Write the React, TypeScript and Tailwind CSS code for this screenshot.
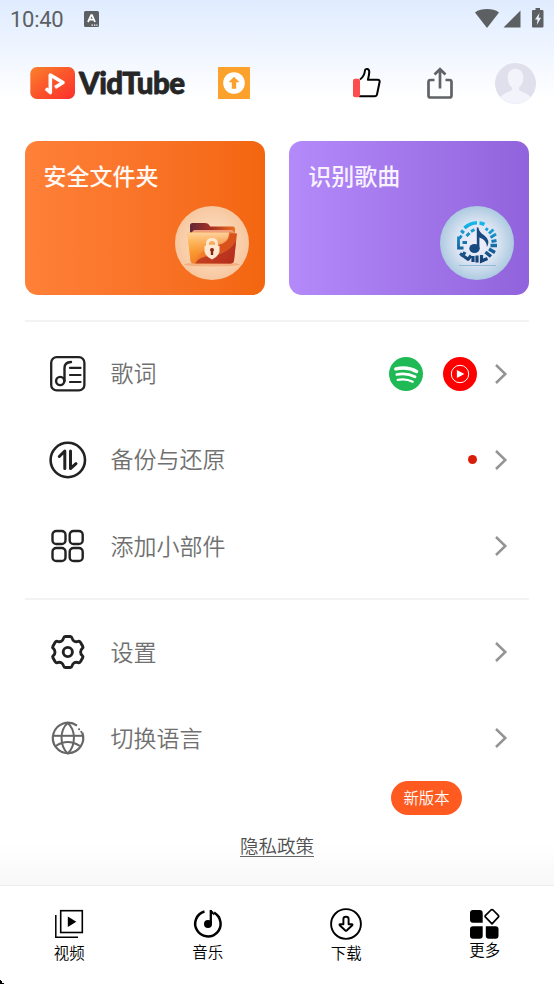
import React from 'react';

type IconProps = { className?: string };

const FONT = "font-['Roboto','Noto_Sans_CJK_SC',sans-serif]";

function StatusBar() {
  return (
    <div className="flex h-[38px] items-center justify-between pl-[10px] pr-[10px] text-[#5c6063]">
      <div className="flex items-center gap-[20px]">
        <span className="w-[54px] whitespace-nowrap pt-[1px] text-[22px] leading-[38px] tracking-[-0.3px]">10:40</span>
        <svg width="15" height="16" viewBox="0 0 15 16">
          <rect width="15" height="16" rx="1.5" fill="#5c6063" />
          <path d="M4 11 7.2 4.2h.8L11 11M5.5 8.7h4" fill="none" stroke="#fff" strokeWidth="1.8" />
          <path d="M7.5 14.2h1.4M10 14.2h1.4M12.3 14.2h1.2" stroke="#fff" strokeWidth="1.2" />
        </svg>
      </div>
      <div className="flex items-center">
        <svg width="24" height="20" viewBox="0 0 24 20" fill="#5c6063">
          <path d="M0 3.500C3.400.9 7.400 0 12 0s8.600.9 12 3.500L12 19z" />
        </svg>
        <svg className="ml-[4px] mt-[-1px]" width="18" height="18" viewBox="0 0 18 18" fill="#5c6063">
          <path d="M17.500.5v17H.5z" />
        </svg>
        <svg className="ml-[11px] mt-[-2px]" width="12" height="20" viewBox="0 0 12 20">
          <path d="M3.500 0h4.500v2H10.500a1 1 0 0 1 1 1v15.500a1 1 0 0 1-1 1H1a1 1 0 0 1-1-1V3a1 1 0 0 1 1-1h2.500z" fill="#5c6063" />
          <path d="M7.500 5 3 11.500h2.500L4.800 17 9 9.800H6.600z" fill="#eef4fd" />
        </svg>
      </div>
    </div>
  );
}

function Logo() {
  return (
    <svg width="157" height="44" viewBox="0 -5 157 44">
      <defs>
        <linearGradient id="logo" x1="0" y1="0" x2="1" y2="1">
          <stop offset="0" stopColor="#fb812c" />
          <stop offset=".5" stopColor="#fb552b" />
          <stop offset="1" stopColor="#fc2f2c" />
        </linearGradient>
      </defs>
      <rect x=".3" y="1" width="44.700" height="32" rx="6.500" fill="url(#logo)" />
      <path d="M15.800 22.500 20.300 26.500V9L33 16.500 25 21.500" fill="none" stroke="#fff" strokeWidth="3.600" strokeLinejoin="round" />
      <text
        x="49"
        y="28"
        textLength="105.500"
        lengthAdjust="spacingAndGlyphs"
        fill="#262626"
        stroke="#262626"
        strokeWidth=".8"
        strokeLinejoin="round"
        className="font-['Lato',sans-serif] text-[30px] font-black tracking-[-0.6px]"
      >
        VidTube
      </text>
    </svg>
  );
}

function Header() {
  return (
    <header className="flex h-[90px] items-center pl-[30px] pr-[18px]">
      <Logo />
      <div className="ml-[31px] flex h-8 w-8 items-center justify-center bg-[#fca12b]">
        <svg width="22" height="22" viewBox="0 0 22 22">
          <circle cx="11" cy="11" r="10.800" fill="#fff" />
          <path d="M11 4.700 5.500 10.200h3.300v6.500h4.400v-6.500h3.300z" fill="#fca12b" />
        </svg>
      </div>
      <svg className="ml-[103px]" width="30" height="32" viewBox="0 0 30 32">
        <path
          d="M7 12.500c3-2 4.500-5 5-9 .2-2.200 4-2.200 4.200.8.200 2.600-.4 5-1.300 8.400h9.800c1.500 0 2.200 1 1.900 2.300L24 27.500c-.3 1.300-1 1.700-2 1.700H6"
          fill="#fff"
          stroke="#000"
          strokeWidth="2"
          strokeLinejoin="round"
        />
        <rect x="0" y="11.800" width="7" height="18.500" rx="2" fill="#fe4b4e" />
      </svg>
      <svg className="ml-[43px]" width="28" height="32" viewBox="0 0 28 32" fill="none" stroke="#5f6267" strokeWidth="2.700">
        <path d="M8.500 13H4.500a2 2 0 0 0-2 2v13.500a2 2 0 0 0 2 2h19a2 2 0 0 0 2-2V15a2 2 0 0 0-2-2h-4" />
        <path d="M14 21.500V3M8.500 7.500 14 2.200l5.500 5.300" />
      </svg>
      <svg className="ml-auto" width="41" height="41" viewBox="0 0 40 40">
        <clipPath id="avatar">
          <circle cx="20" cy="20" r="20" />
        </clipPath>
        <g clipPath="url(#avatar)">
          <rect width="40" height="40" fill="#dfe0eb" />
          <path d="M20 5.500c-5 0-7.800 4-7.600 8.800.2 4 1.600 7.700 4.200 9.500v2.400c0 1.500-8.600 3-12.600 8.300V40h32v-5.500c-4-5.300-12.600-6.800-12.600-8.300v-2.400c2.600-1.800 4-5.500 4.200-9.500C27.800 9.500 25 5.500 20 5.500z" fill="#f3f3fc" />
        </g>
      </svg>
    </header>
  );
}

function FolderArt() {
  return (
    <svg width="74" height="74" viewBox="0 0 74 74">
      <defs>
        <radialGradient id="peach">
          <stop offset="0" stopColor="#ffe6cc" />
          <stop offset="1" stopColor="#f7c79f" />
        </radialGradient>
        <linearGradient id="folder" x1="0" y1=".3" x2="1" y2=".8">
          <stop offset="0" stopColor="#ffa01c" />
          <stop offset=".45" stopColor="#f07a2c" />
          <stop offset="1" stopColor="#b93620" />
        </linearGradient>
        <linearGradient id="shine" x1="0" y1="0" x2="0" y2="1">
          <stop offset="0" stopColor="#ffd3a0" />
          <stop offset="1" stopColor="#ff9a1d" stopOpacity="0" />
        </linearGradient>
        <linearGradient id="back">
          <stop offset="0" stopColor="#612739" />
          <stop offset=".5" stopColor="#a93320" />
          <stop offset="1" stopColor="#ef701f" />
        </linearGradient>
      </defs>
      <circle cx="37" cy="37" r="37" fill="url(#peach)" />
      <ellipse cx="37" cy="58.500" rx="28" ry="2" fill="#ef9258" opacity=".5" />
      <path d="M15 31V19.500q0-2.500 2.500-2.500H30q3 0 4 1.800l1.200 1.700H58q2 0 2 2V32z" fill="url(#back)" />
      <path d="M19 24h38l3 3v8H17v-9z" fill="#ef9d7b" />
      <path d="M14 26.500h42l6 1-3 27q-.4 3-3.500 3H19q-3.300 0-3.600-3L12.600 28.500q0-2 1.400-2z" fill="url(#folder)" />
      <path d="M14 26.500h40q0 12-15 13Q25 43 19 57.500q-3.300 0-3.600-3L12.600 28.500q0-2 1.400-2z" fill="url(#shine)" />
      <path d="M55 28q0 9-12 11 0 6-4 9 16-3 21-14l1.500-6z" fill="#d9521c" />
      <path d="M20 57.500Q24 50 36 50q19-3 25-15l-2 19.500q-.4 3-3.500 3z" fill="#b42b1c" opacity=".75" />
      <path d="M32.500 41v-3.200q0-4.300 4.500-4.300t4.500 4.300V41" fill="none" stroke="#ffe8cf" strokeWidth="3" />
      <path d="M29.500 40q7.500-3 15 0v5.500q-1 5-7.500 8-6.500-3-7.500-8z" fill="#ffe8cf" />
      <path d="M37 42a2 2 0 0 1 1.200 3.600V49h-2.400v-3.400A2 2 0 0 1 37 42z" fill="#8b2716" />
    </svg>
  );
}

function SongArt() {
  return (
    <svg width="74" height="74" viewBox="0 0 74 74">
      <defs>
        <radialGradient id="ice">
          <stop offset="0" stopColor="#f3effd" />
          <stop offset=".55" stopColor="#dce5f3" />
          <stop offset="1" stopColor="#adcae0" />
        </radialGradient>
        <linearGradient id="ring" gradientUnits="userSpaceOnUse" x1="0" y1="15" x2="0" y2="56">
          <stop offset="0" stopColor="#18bdee" />
          <stop offset=".5" stopColor="#1779b4" />
          <stop offset="1" stopColor="#163d70" />
        </linearGradient>
      </defs>
      <circle cx="37" cy="37" r="37" fill="url(#ice)" />
      <g fill="none" stroke="url(#ring)">
        <path d="M24.500 22Q30 17 37 16.800M39.500 17q2.500.2 5 1.300" strokeWidth="3.600" />
        <path d="M21 24.500l3 2.500M26.500 30l3-3M31 25.500l3.500-2M45.500 22.500l2.500 1.500" strokeWidth="3" />
        <path d="M49 27.500l4.500-4M50.500 31.500l5.500-3.500M51.500 35.500l5-1" strokeWidth="3" />
        <path d="M50.500 39.500h6.500M49 43l6 3.500M45.500 46l5.500 4.500" strokeWidth="3.400" />
        <path d="M18.500 30.500v11.500h5M21.500 29.500l-2 3M22.500 36.500h4.500" strokeWidth="2.800" />
        <path d="M20 47.500l9 6.500M25 46l-3 5M31 49.500l-3 4M33 50v6M37 49.500v7M41.500 49v6l6-2.500" strokeWidth="3.200" />
      </g>
      <ellipse cx="34.500" cy="42.500" rx="5.200" ry="4.500" fill="#174a80" />
      <path d="M36.800 43V21.500h1.600q.5 4.500 6 8 6.500 5 2.500 11.500 0-7-7.500-9.500V43z" fill="#174a80" />
      <path d="M19 59.500h37" stroke="#92b9d8" strokeWidth="1" />
    </svg>
  );
}

function LyricsIcon() {
  return (
    <svg width="38" height="38" viewBox="0 0 38 38" fill="none" stroke="#222" strokeLinecap="round">
      <rect x="2.200" y="2.200" width="33.200" height="33.200" rx="5.500" strokeWidth="2.300" />
      <circle cx="11.200" cy="26" r="4.100" strokeWidth="2.400" />
      <path d="M15.500 26V13q0-5.700 6.500-6" strokeWidth="2.400" />
      <path d="M21 12.900h10.500M21 20h10.500M21 27h10.500" strokeWidth="2.200" />
    </svg>
  );
}

function BackupIcon() {
  return (
    <svg width="38" height="38" viewBox="0 0 38 38" fill="none" stroke="#222" strokeLinecap="round" strokeLinejoin="round">
      <circle cx="18.800" cy="19" r="17.200" strokeWidth="2.600" />
      <path d="M10.300 15.500 15.800 10v17.500M21.500 10v17.500l5.500-4.800" strokeWidth="3" />
    </svg>
  );
}

function WidgetIcon() {
  return (
    <svg width="38" height="38" viewBox="0 0 38 38" fill="none" stroke="#222" strokeWidth="2.400">
      <rect x="3.500" y="4" width="13" height="13" rx="3.800" />
      <rect x="20.700" y="4" width="13" height="13" rx="3.800" />
      <rect x="3.500" y="21" width="13" height="13" rx="3.800" />
      <rect x="20.700" y="21" width="13" height="13" rx="3.800" />
    </svg>
  );
}

function SettingsIcon() {
  return (
    <svg width="38" height="38" viewBox="0 0 38 38" fill="none" stroke="#222" strokeWidth="2.900" strokeLinejoin="round">
      <path d="M16.300 3.500h5q1.300 0 1.700 1.500.6 2.300 2.300 3.200 1.700.9 4 .2 1.300-.4 2.100.8l2.300 4q.7 1.200-.4 2.100-1.700 1.400-1.700 3.700t1.700 3.700q1.100.9.400 2.100l-2.300 4q-.8 1.200-2.100.8-2.300-.7-4 .2-1.700.9-2.300 3.200-.4 1.500-1.700 1.500h-5q-1.300 0-1.700-1.500-.6-2.300-2.300-3.200-1.700-.9-4-.2-1.300.4-2.100-.8l-2.300-4q-.7-1.200.4-2.100Q6 21.300 6 19t-1.700-3.700q-1.100-.9-.4-2.100l2.300-4q.8-1.200 2.100-.8 2.300.7 4-.2 1.700-.9 2.300-3.200.4-1.500 1.700-1.500z" />
      <circle cx="18.800" cy="19" r="4.600" />
    </svg>
  );
}

function GlobeIcon() {
  return (
    <svg width="38" height="38" viewBox="0 0 38 38" fill="none" stroke="#666" strokeWidth="2">
      <path d="M28 6.700A15.200 15.200 0 1 0 33.200 13.500" strokeWidth="2.200" />
      <path d="M3.600 16.800h30.600" />
      <path d="M18.700 4C10.500 11 10.500 27 18.700 34.500 27 27 27 11 18.700 4zM6.700 27q12-8 24.200 0" />
      <path d="M30 10.300h.2M32.300 12.800v.2" strokeWidth="2" strokeLinecap="round" />
    </svg>
  );
}

function Chevron({ className }: IconProps) {
  return (
    <svg className={className} width="14" height="22" viewBox="0 0 14 22" fill="none" stroke="#949494" strokeWidth="2.500">
      <path d="m2 2 9.300 9L2 20" />
    </svg>
  );
}

function ServiceIcons() {
  return (
    <div className="mr-[-0.500px] flex gap-[20px]">
      <svg width="34" height="34" viewBox="0 0 34 34" fill="none" stroke="#fff" strokeLinecap="round">
        <circle cx="17" cy="17" r="17" fill="#1fba55" stroke="none" />
        <path d="M6.800 11.900q11.700-2.500 20.800 2.500" strokeWidth="3.400" />
        <path d="M7.800 17.500q10-2 18.200 2.300" strokeWidth="2.800" />
        <path d="M8.700 22.800q8.500-1.500 15 2" strokeWidth="2.300" />
      </svg>
      <svg width="34" height="34" viewBox="0 0 34 34">
        <circle cx="17" cy="17" r="17" fill="#fe0000" />
        <circle cx="17" cy="17" r="8.700" fill="none" stroke="#fff" strokeWidth="1" />
        <path d="m13.900 12.900 7.500 4.100-7.500 4.100z" fill="#fff" />
      </svg>
    </div>
  );
}

interface MenuRowProps {
  icon: React.ReactNode;
  label: string;
  extra?: React.ReactNode;
}

function MenuRow({ icon, label, extra }: MenuRowProps) {
  return (
    <div className="flex h-[86.300px] items-center pl-[24px] pr-[21px]">
      {icon}
      <span className="ml-[24px] pt-[2px] text-[23px] font-[350] leading-none text-[#707070]">{label}</span>
      <div className="ml-auto flex items-center">
        {extra}
        <Chevron className="ml-[18px]" />
      </div>
    </div>
  );
}

function VideoIcon() {
  return (
    <svg width="32" height="32" viewBox="0 0 32 32" fill="none" stroke="#000">
      <rect x="7.700" y="2.700" width="21.600" height="21.800" strokeWidth="1.600" />
      <path d="M2.800 7v22.200H25" strokeWidth="1.500" />
      <path d="m14.800 8.500 8.500 5.200-8.500 5.200z" fill="#000" stroke="none" />
    </svg>
  );
}

function MusicIcon() {
  return (
    <svg width="32" height="32" viewBox="0 0 32 32" fill="none" stroke="#000">
      <path d="M12.500 3.500A12.700 12.700 0 1 0 22 4.600" strokeWidth="2.500" />
      <path d="M18.800 2v14" strokeWidth="2.300" />
      <path d="M18 2.200q4.500.3 4 5.600-.5-2-4-2.300z" fill="#000" stroke="none" />
      <circle cx="16" cy="16" r="4" fill="#000" stroke="none" />
    </svg>
  );
}

function DownloadIcon() {
  return (
    <svg width="32" height="32" viewBox="0 0 32 32" fill="none" stroke="#000" strokeWidth="1.900" strokeLinejoin="round">
      <circle cx="16" cy="16" r="14.900" />
      <path d="M13.400 16.200V11q0-2.300 2.600-2.300t2.600 2.300v5.200h3.200q1.200 0 .5 1L16.700 22.500q-.7.600-1.400 0L9.700 17.200q-.7-1 .5-1z" />
    </svg>
  );
}

function MoreIcon() {
  return (
    <svg width="32" height="32" viewBox="0 0 32 32">
      <path d="M4 2H10.500q3.200 0 3.200 3.200v9.500H4q-3 0-3-3V5q0-3 3-3z" />
      <path d="M4 18.200h9.700v9.500q0 3-3 3H4q-3 0-3-3v-6.500q0-3 3-3z" />
      <path d="M16.800 18.200h9.700q3 0 3 3v6.500q0 3-3 3h-6.700q-3 0-3-3z" />
      <path d="m22 2-5.500 5.300q-.8.900 0 1.900l6.500 6.600 6.300-6.600q.8-1 0-1.900L24 2q-1-.9-2 0z" fill="#fff" stroke="#000" strokeWidth="1.700" strokeLinejoin="round" />
    </svg>
  );
}

const TABS = [
  { label: '视频', icon: <VideoIcon />, text: 'mt-[4px]' },
  { label: '音乐', icon: <MusicIcon />, text: 'mt-[3px]' },
  { label: '下载', icon: <DownloadIcon />, text: 'mt-[4px]' },
  { label: '更多', icon: <MoreIcon />, text: 'mt-[1px]' },
];

export default function App() {
  return (
    <div className={`relative flex h-[984px] w-[554px] flex-col overflow-hidden bg-white ${FONT}`}>
      <div className="h-[141px] bg-linear-to-b from-[#dfecff] via-[#eff5ff] via-35% to-white to-70%">
        <StatusBar />
        <Header />
      </div>

      <div className="flex gap-[24px] pl-[24.500px] pr-[25px]">
        <div className="flex h-[154px] flex-1 flex-col justify-between rounded-[13px] bg-linear-to-r from-[#ff8038] to-[#f3660f] pb-[15px] pl-[19px] pr-[15.500px] pt-[25px]">
          <h2 className="text-[23px] font-medium leading-[24px] text-[#fff8f3]">安全文件夹</h2>
          <div className="self-end"><FolderArt /></div>
        </div>
        <div className="flex h-[154px] flex-1 flex-col justify-between rounded-[13px] bg-linear-to-r from-[#b48afa] to-[#9163dc] pb-[15px] pl-[19.500px] pr-[15px] pt-[25px]">
          <h2 className="text-[23px] font-medium leading-[24px] text-[#f8f2ff]">识别歌曲</h2>
          <div className="self-end"><SongArt /></div>
        </div>
      </div>

      <section className="ml-[24.500px] mr-[25px] mt-[25px] border-t-2 border-[#f3f3f3] pt-[8.500px]">
        <MenuRow icon={<LyricsIcon />} label="歌词" extra={<ServiceIcons />} />
        <MenuRow
          icon={<BackupIcon />}
          label="备份与还原"
          extra={<span className="mr-[-1px] h-[9px] w-[9px] rounded-full bg-[#d91d08]" />}
        />
        <MenuRow icon={<WidgetIcon />} label="添加小部件" />
      </section>

      <section className="ml-[24.500px] mr-[25px] mt-[8.500px] border-t-2 border-[#f3f3f3] pt-[9px]">
        <MenuRow icon={<SettingsIcon />} label="设置" />
        <MenuRow icon={<GlobeIcon />} label="切换语言" />
      </section>

      <div className="ml-[391px] flex h-[34px] w-[71px] items-center justify-center rounded-full bg-[#ff5a20] pt-[2px] text-[15.400px] font-[350] leading-none text-white">
        新版本
      </div>

      <div className="flex flex-1 justify-center bg-linear-to-b from-white from-40% to-[#f8f8f8] pt-[21px]">
        <a className="h-[21px] border-b border-[#666] text-[18.500px] font-[350] leading-[22px] text-[#505050]">隐私政策</a>
      </div>

      <nav className="grid h-[99px] grid-cols-4 border-t border-[#ececec] bg-white pt-[22px]">
        {TABS.map(tab => (
          <div key={tab.label} className="flex flex-col items-center">
            {tab.icon}
            <span className={`text-[15.400px] font-[350] leading-[20px] text-black ${tab.text}`}>{tab.label}</span>
          </div>
        ))}
      </nav>

      {/* pointer tip in the corner */}
      <svg className="absolute bottom-0 left-0" width="4" height="4" viewBox="0 0 4 4">
        <path d="M0 0h1v1h1v2h2v1H0z" />
      </svg>
    </div>
  );
}
